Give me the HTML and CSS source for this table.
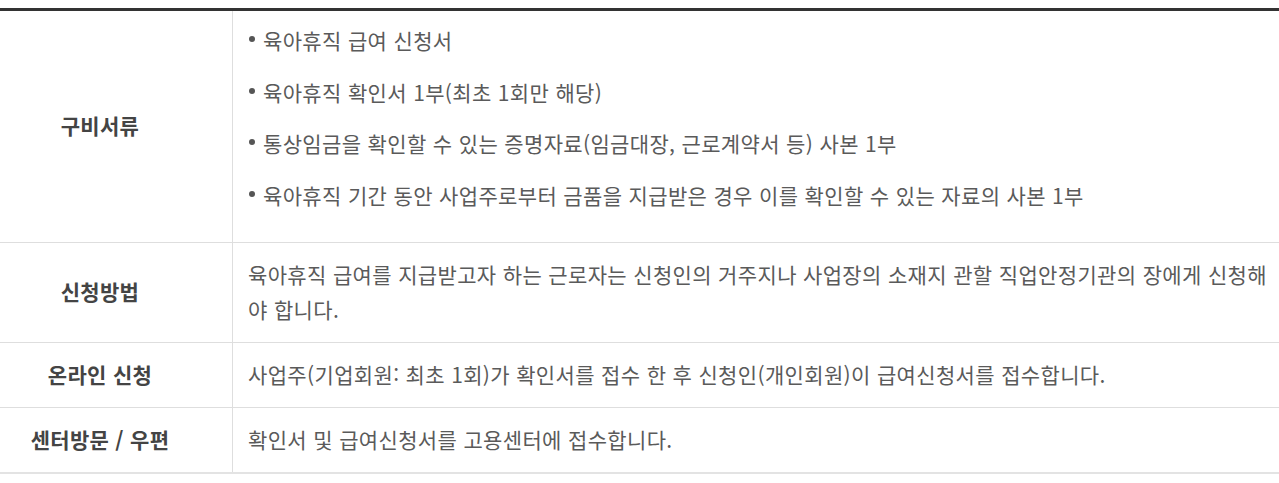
FILE: index.html
```html
<!DOCTYPE html>
<html lang="ko">
<head>
<meta charset="utf-8">
<link rel="stylesheet" href="styles.css">
</head>
<body>
<div class="wrap">
<table class="info">
  <tr>
    <th>구비서류</th>
    <td class="list-cell">
      <ul class="docs">
        <li>육아휴직 급여 신청서</li>
        <li>육아휴직 확인서 1부(최초 1회만 해당)</li>
        <li>통상임금을 확인할 수 있는 증명자료(임금대장, 근로계약서 등) 사본 1부</li>
        <li>육아휴직 기간 동안 사업주로부터 금품을 지급받은 경우 이를 확인할 수 있는 자료의 사본 1부</li>
      </ul>
    </td>
  </tr>
  <tr>
    <th>신청방법</th>
    <td>육아휴직 급여를 지급받고자 하는 근로자는 신청인의 거주지나 사업장의 소재지 관할 직업안정기관의 장에게 신청해야 합니다.</td>
  </tr>
  <tr>
    <th>온라인 신청</th>
    <td>사업주(기업회원: 최초 1회)가 확인서를 접수 한 후 신청인(개인회원)이 급여신청서를 접수합니다.</td>
  </tr>
  <tr>
    <th>센터방문 / 우편</th>
    <td>확인서 및 급여신청서를 고용센터에 접수합니다.</td>
  </tr>
</table>
</div>
</body>
</html>
```

FILE: styles.css
```css
html, body {
  margin: 0;
  padding: 0;
  background: #fff;
}
.wrap {
  padding-top: 8px;
}
.info {
  width: 100%;
  border-collapse: collapse;
  border-top: 3px solid #333;
  border-bottom: 2px solid #e3e3e3;
  font-family: "Noto Sans CJK KR", "Noto Sans", sans-serif;
}
.info th, .info td {
  border-top: 1px solid #dedede;
  line-height: 35px;
  vertical-align: middle;
}
.info tr:first-child th, .info tr:first-child td {
  border-top: none;
}
.info th {
  width: 200px;
  padding: 14px 32px 15px 0;
  border-right: 1px solid #dedede;
  color: #444;
  font-weight: bold;
  text-align: center;
  font-size: 21px;
  letter-spacing: 0.3px;
}
.info td {
  padding: 14px 12px 15px 15px;
  color: #5a5a5a;
  text-align: left;
  font-size: 21px;
  letter-spacing: 0.35px;
}
.info td.list-cell {
  padding-top: 12px;
  padding-bottom: 12px;
}
.docs {
  list-style: none;
  margin: 0;
  padding: 0;
}
.docs li {
  position: relative;
  padding-left: 15px;
  margin-bottom: 16.67px;
}
.docs li::before {
  content: "";
  position: absolute;
  left: 1px;
  top: 13px;
  width: 6px;
  height: 6px;
  border-radius: 50%;
  background: #555;
}
```
